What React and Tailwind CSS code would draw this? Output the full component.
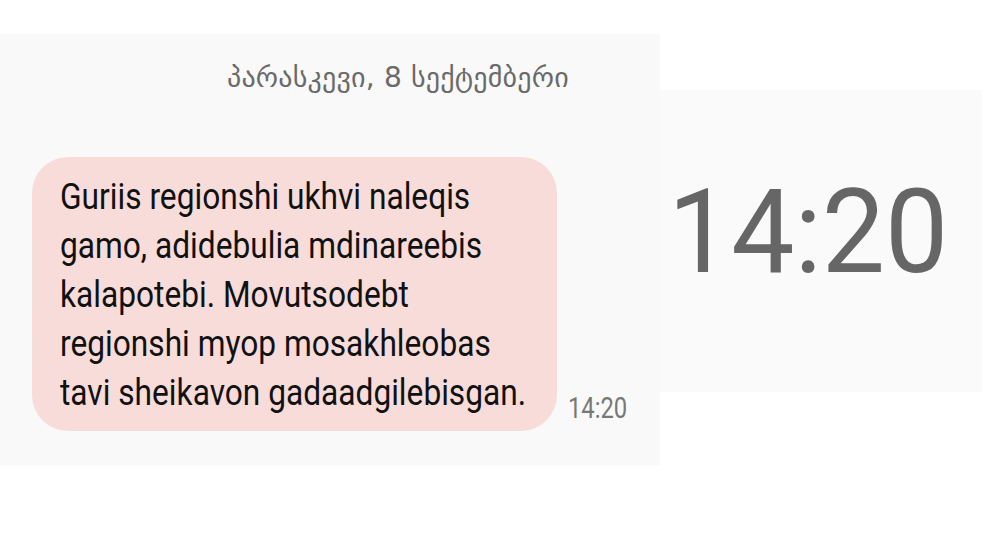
export default function App() {
  return (
    <div className="w-[1000px] h-[550px] bg-white flex items-start overflow-hidden">
      {/* Conversation panel */}
      <div className="mt-[34px] w-[660px] h-[431px] bg-[#f9f9f9] flex flex-col">
        <div
          className="pl-[227px] pt-[27px] text-[28px] leading-[34px] text-[#6a6a6a] tracking-[0.2px]"
          style={{ fontFamily: '"DejaVu Sans", sans-serif' }}
        >
          პარასკევი, 8 სექტემბერი
        </div>
        <div className="mt-[62px] ml-[32px] flex items-end gap-[11px]">
          <div className="w-[525px] h-[274px] shrink-0 rounded-[36px] bg-[#f7dcd9] pl-[28px] pt-[16px] overflow-hidden">
            <div
              className="origin-top-left scale-x-[0.88] whitespace-nowrap text-[36px] leading-[49px] text-[#111]"
              style={{ fontFamily: 'Roboto, sans-serif' }}
            >
              <p>Guriis regionshi ukhvi naleqis</p>
              <p>gamo, adidebulia mdinareebis</p>
              <p>kalapotebi. Movutsodebt</p>
              <p>regionshi myop mosakhleobas</p>
              <p>tavi sheikavon gadaadgilebisgan.</p>
            </div>
          </div>
          <span
            className="mb-[6px] origin-left scale-x-[0.82] text-[29px] leading-[34px] text-[#777]"
            style={{ fontFamily: 'Roboto, sans-serif' }}
          >
            14:20
          </span>
        </div>
      </div>

      {/* Zoomed timestamp */}
      <div className="mt-[90px] w-[322px] h-[302px] bg-[#fafafa] pl-[8px] pt-[84px]">
        <div
          className="origin-left scale-x-[0.97] whitespace-nowrap text-[116px] leading-none text-[#666]"
          style={{ fontFamily: 'Roboto, sans-serif' }}
        >
          14:20
        </div>
      </div>
    </div>
  );
}
